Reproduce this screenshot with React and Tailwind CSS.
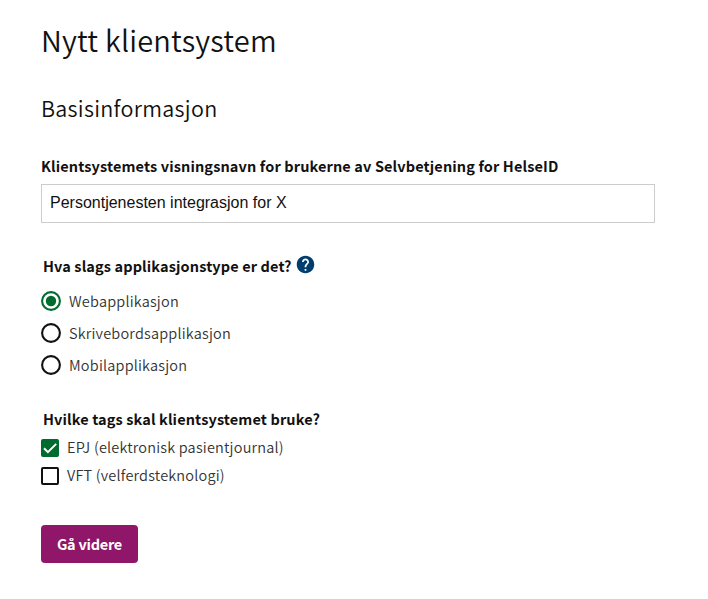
const radios = ["Webapplikasjon", "Skrivebordsapplikasjon", "Mobilapplikasjon"];
const bodyText = "text-[14.5px] font-[350] tracking-[0.2px] text-[#333]";
const labelText = "text-[14.5px] leading-[22px] font-bold tracking-[0.12px] whitespace-nowrap";

function Radio({ checked }) {
  return (
    <svg viewBox="0 0 20 20" className="size-5">
      <circle
        cx="10"
        cy="10"
        r="8.9"
        fill="none"
        strokeWidth="2.1"
        className={checked ? "stroke-[#006b2f]" : "stroke-[#111]"}
      />
      {checked && <circle cx="10" cy="10" r="5.2" className="fill-[#006b2f]" />}
    </svg>
  );
}

function Checkbox({ checked }) {
  return (
    <span
      className={
        "flex size-[18px] items-center justify-center rounded-[2px] " +
        (checked ? "bg-[#006b2f]" : "border-2 border-[#111]")
      }
    >
      {checked && (
        <svg viewBox="0 0 18 18" className="size-[18px]" fill="none" stroke="white" strokeWidth="2">
          <path d="M3 9.3 6.9 13.2 15.2 4.9" />
        </svg>
      )}
    </span>
  );
}

function HelpIcon() {
  return (
    <svg viewBox="0 0 24 24" className="mb-[3px] ml-[3px] size-[21px] shrink-0" fill="#013e6e">
      <path d="M12 2C6.48 2 2 6.48 2 12s4.48 10 10 10 10-4.48 10-10S17.52 2 12 2zm1 17h-2v-2h2v2zm2.07-7.75-.9.92C13.45 12.9 13 13.5 13 15h-2v-.5c0-1.1.45-2.1 1.17-2.83l1.24-1.26c.37-.36.59-.86.59-1.41 0-1.1-.9-2-2-2s-2 .9-2 2H8c0-2.21 1.79-4 4-4s4 1.79 4 4c0 .88-.36 1.68-.93 2.25z" />
    </svg>
  );
}

export default function App() {
  return (
    <main className="h-[599px] bg-white pt-[19px] pl-[41px] font-['Noto_Sans_CJK_JP',sans-serif] text-[#111]">
      <h1 className="text-[29px] leading-[40px] font-[350] tracking-[0.2px]">Nytt klientsystem</h1>
      <h2 className="mt-[33px] text-[21.5px] leading-[32px] font-[350] tracking-[0.3px]">Basisinformasjon</h2>
      <label className={"mt-[31px] block " + labelText}>
        Klientsystemets visningsnavn for brukerne av Selvbetjening for HelseID
      </label>
      <div className="mt-[7px] flex h-[39px] w-[614px] items-center border border-[#ccc] pb-[2px] pl-2 font-['Liberation_Sans',sans-serif] text-base">
        Persontjenesten integrasjon for X
      </div>
      <div className={"mt-[32px] ml-[2px] flex h-[22px] items-center " + labelText}>
        Hva slags applikasjonstype er det?
        <HelpIcon />
      </div>
      <div className="mt-[14px] flex flex-col gap-3">
        {radios.map((r, i) => (
          <div key={r} className={"flex h-5 items-center gap-2 " + bodyText}>
            <Radio checked={i === 0} />
            {r}
          </div>
        ))}
      </div>
      <div className={"mt-[33px] ml-[2px] " + labelText}>Hvilke tags skal klientsystemet bruke?</div>
      <div className="mt-[9px] flex flex-col gap-[10px]">
        <div className={"flex h-[18px] items-center gap-2 " + bodyText}>
          <Checkbox checked />
          <span className="pb-[2px]">EPJ (elektronisk pasientjournal)</span>
        </div>
        <div className={"flex h-[18px] items-center gap-2 " + bodyText}>
          <Checkbox />
          <span className="pb-[2px]">VFT (velferdsteknologi)</span>
        </div>
      </div>
      <button className="mt-[40px] flex h-[38px] w-[97px] items-center justify-center rounded-[4px] bg-[#90166a] text-[14.5px] font-bold tracking-[-0.25px] text-white">
        Gå videre
      </button>
    </main>
  );
}
